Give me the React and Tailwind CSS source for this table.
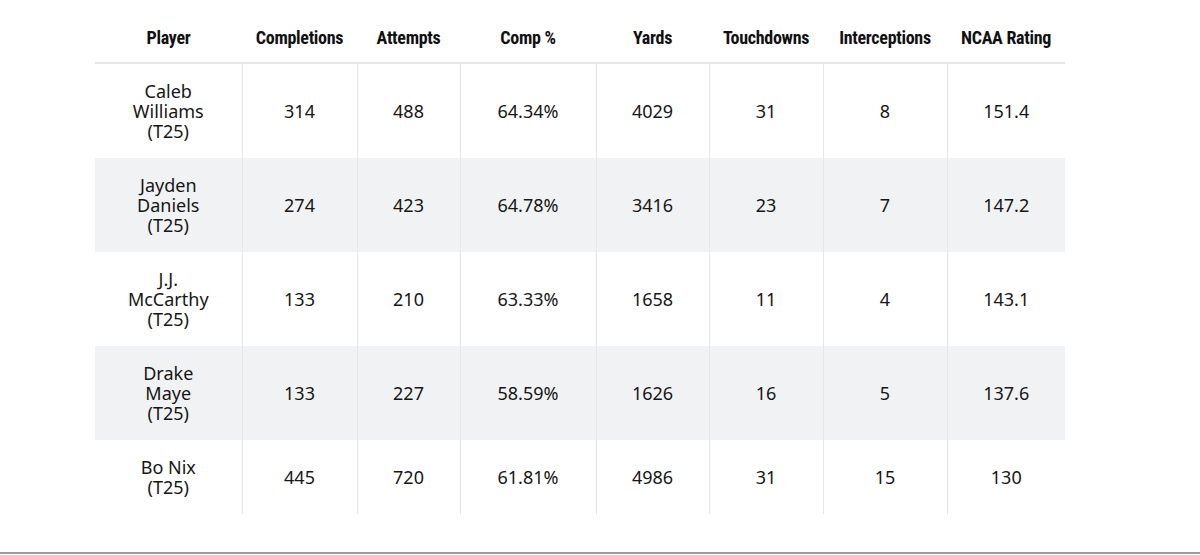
const cols = [147, 115, 103, 136, 113, 114, 124, 118];

const headers = ['Player', 'Completions', 'Attempts', 'Comp %', 'Yards', 'Touchdowns', 'Interceptions', 'NCAA Rating'];

const rows = [
  { name: ['Caleb', 'Williams', '(T25)'], stats: ['314', '488', '64.34%', '4029', '31', '8', '151.4'] },
  { name: ['Jayden', 'Daniels', '(T25)'], stats: ['274', '423', '64.78%', '3416', '23', '7', '147.2'] },
  { name: ['J.J.', 'McCarthy', '(T25)'], stats: ['133', '210', '63.33%', '1658', '11', '4', '143.1'] },
  { name: ['Drake', 'Maye', '(T25)'], stats: ['133', '227', '58.59%', '1626', '16', '5', '137.6'] },
  { name: ['Bo Nix', '(T25)'], stats: ['445', '720', '61.81%', '4986', '31', '15', '130'] },
];

export default function App() {
  return (
    <div className="w-[1200px] h-[555px] bg-white flex flex-col overflow-hidden">
      <div className="flex-1 pl-[95px]">
        <table
          className="border-collapse table-fixed text-[#161616]"
          style={{ width: 970 }}
        >
          <colgroup>
            {cols.map((w, i) => (
              <col key={i} style={{ width: w }} />
            ))}
          </colgroup>
          <thead>
            <tr className="h-[63px] border-b-2 border-[#e6e7e9]">
              {headers.map((h) => (
                <th
                  key={h}
                  className="pt-[13px] text-center text-[18px] font-bold tracking-[-0.3px] text-[#111] font-['Roboto',sans-serif] [font-stretch:condensed] whitespace-nowrap"
                >
                  {h}
                </th>
              ))}
            </tr>
          </thead>
          <tbody className="font-['Noto_Sans',sans-serif] text-[18px] leading-[20px]">
            {rows.map((r, i) => (
              <tr key={i} className={i % 2 === 1 ? 'bg-[#f1f2f4]' : 'bg-white'}>
                <td className="text-center py-[17px]">
                  {r.name.map((n) => (
                    <div key={n}>{n}</div>
                  ))}
                </td>
                {r.stats.map((s, j) => (
                  <td key={j} className="text-center border-l border-[#e6e7e9]">
                    {s}
                  </td>
                ))}
              </tr>
            ))}
          </tbody>
        </table>
      </div>
      <div className="h-[2px] bg-[#9a9a9a] mb-[1px]" />
    </div>
  );
}
